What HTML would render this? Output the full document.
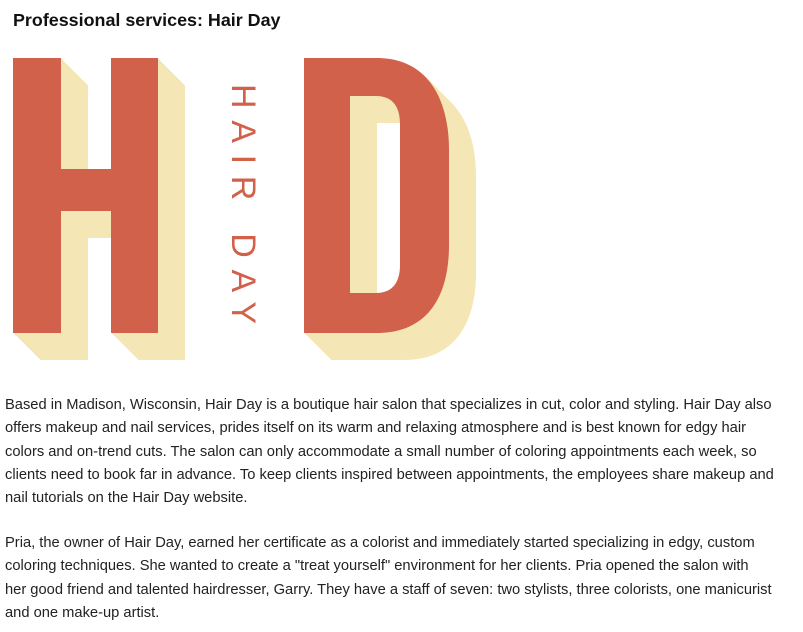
<!DOCTYPE html>
<html><head><meta charset="utf-8"><style>
body{margin:0;background:#fff;width:803px;height:632px;overflow:hidden;font-family:"Liberation Sans",sans-serif;color:#222}
h1{position:absolute;left:13px;top:10px;margin:0;font-size:17.9px;font-weight:bold;color:#111}
svg{position:absolute;left:0;top:0}
.p{position:absolute;left:5px;font-size:14.7px;line-height:23.3px;white-space:nowrap}
</style></head><body>
<h1>Professional services: Hair Day</h1>
<svg width="803" height="380" viewBox="0 0 803 380">
<defs>
<path id="hd" fill-rule="evenodd" d="M13,58H61V169H111V58H158V333H111V211H61V333H13Z M304,58H377C425,58 449,95 449,150V245C449,300 425,333 377,333H304Z M350,96V293H376C392,293 400,283 400,265V124C400,106 392,96 376,96Z"/>
</defs>
<g fill="#f5e6b5">
<use href="#hd" x="27" y="27"/><use href="#hd" x="26" y="26"/><use href="#hd" x="25" y="25"/><use href="#hd" x="24" y="24"/><use href="#hd" x="23" y="23"/><use href="#hd" x="22" y="22"/><use href="#hd" x="21" y="21"/><use href="#hd" x="20" y="20"/><use href="#hd" x="19" y="19"/><use href="#hd" x="18" y="18"/><use href="#hd" x="17" y="17"/><use href="#hd" x="16" y="16"/><use href="#hd" x="15" y="15"/><use href="#hd" x="14" y="14"/><use href="#hd" x="13" y="13"/><use href="#hd" x="12" y="12"/><use href="#hd" x="11" y="11"/><use href="#hd" x="10" y="10"/><use href="#hd" x="9" y="9"/><use href="#hd" x="8" y="8"/><use href="#hd" x="7" y="7"/><use href="#hd" x="6" y="6"/><use href="#hd" x="5" y="5"/><use href="#hd" x="4" y="4"/><use href="#hd" x="3" y="3"/><use href="#hd" x="2" y="2"/><use href="#hd" x="1" y="1"/>
</g>
<use href="#hd" fill="#d2614c"/>
<text transform="translate(232,84) rotate(90)" font-family="Liberation Sans,sans-serif" font-size="34" fill="#d2614c" letter-spacing="10" textLength="250" lengthAdjust="spacing">HAIR DAY</text>
</svg>
<div class="p" style="top:394px">Based in Madison, Wisconsin, Hair Day is a boutique hair salon that specializes in cut, color and styling. Hair Day also<br>offers makeup and nail services, prides itself on its warm and relaxing atmosphere and is best known for edgy hair<br>colors and on-trend cuts. The salon can only accommodate a small number of coloring appointments each week, so<br>clients need to book far in advance. To keep clients inspired between appointments, the employees share makeup and<br>nail tutorials on the Hair Day website.</div>
<div class="p" style="top:532px">Pria, the owner of Hair Day, earned her certificate as a colorist and immediately started specializing in edgy, custom<br>coloring techniques. She wanted to create a "treat yourself" environment for her clients. Pria opened the salon with<br>her good friend and talented hairdresser, Garry. They have a staff of seven: two stylists, three colorists, one manicurist<br>and one make-up artist.</div>
</body></html>
